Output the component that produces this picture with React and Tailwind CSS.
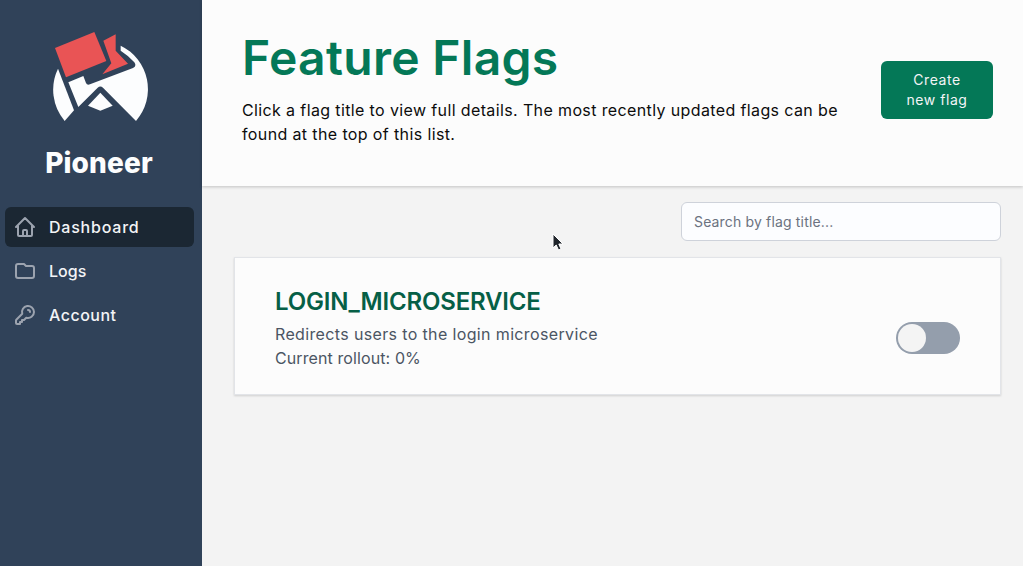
const navItems = [
  {
    label: "Dashboard",
    active: true,
    tracking: "tracking-[0.78px]",
    path: "M3 12l2-2m0 0l7-7 7 7M5 10v10a1 1 0 001 1h3m10-11l2 2m-2-2v10a1 1 0 01-1 1h-3m-6 0a1 1 0 001-1v-4a1 1 0 011-1h2a1 1 0 011 1v4a1 1 0 001 1m-6 0h6",
  },
  {
    label: "Logs",
    tracking: "tracking-normal",
    path: "M3 7v10a2 2 0 002 2h14a2 2 0 002-2V9a2 2 0 00-2-2h-6l-2-2H5a2 2 0 00-2 2z",
  },
  {
    label: "Account",
    tracking: "tracking-[0.5px]",
    path: "M15 7a2 2 0 012 2m4 0a6 6 0 01-7.743 5.743L11 17H9v2H7v2H4a1 1 0 01-1-1v-2.586a1 1 0 01.293-.707l5.964-5.964A6 6 0 1121 9z",
  },
];

function Logo() {
  return (
    <svg viewBox="60 30 300 280" className="h-[93.33px] w-[100px]" aria-hidden="true">
      <g fill="#fcfdfe">
        <path d="M84 146L132 271L104 303A145 145 0 0 1 84 146Z" />
        <path d="M272 77A145 145 0 0 1 318 303L219 203Q211 196 203 203L145 261L115 187L160 168L168 189Q171 196 180 193L309 144Q321 138 313 127Q293 105 272 92Z" />
        <path d="M211 218L248 257L211 272L174 257Z" />
      </g>
      <g fill="#e95455">
        <path d="M75 84L193 36L229 123L108 172Z" />
        <path d="M220 62L257 43V92L294 131L217 163L244 130Z" />
      </g>
    </svg>
  );
}

function Sidebar() {
  return (
    <aside className="flex w-[202px] shrink-0 flex-col bg-[#304259]">
      <div className="flex flex-col items-center pt-[30px] pr-[2px]">
        <Logo />
        <div className="mt-[22px] h-9 pr-[2px] text-[28px] leading-9 font-extrabold tracking-[0.15px] text-[#fcfdfe]">Pioneer</div>
      </div>
      <nav className="mt-[26px] flex flex-col gap-1 pr-2 pl-[5px]">
        {navItems.map((item) => (
          <a
            key={item.label}
            className={
              item.active
                ? "flex h-10 items-center gap-3 rounded-md bg-[#1b2733] px-2 text-[#f3f4f6]"
                : "flex h-10 items-center gap-3 rounded-md px-2 text-[#f3f4f6]"
            }
          >
            <svg
              viewBox="0 0 24 24"
              className="size-6 text-[#9ca3af]"
              fill="none"
              stroke="currentColor"
              strokeWidth="2"
              strokeLinecap="round"
              strokeLinejoin="round"
            >
              <path d={item.path} />
            </svg>
            <span className={`text-base font-medium ${item.tracking}`}>{item.label}</span>
          </a>
        ))}
      </nav>
    </aside>
  );
}

function Header() {
  return (
    <header className="flex h-[186px] shrink-0 items-start justify-between bg-[#fcfcfc] pr-[30px] pl-10 shadow-[0_1px_3px_rgba(0,0,0,0.2)]">
      <div className="pt-[34px]">
        <h1 className="text-5xl leading-[48px] font-semibold tracking-[0.3px] text-[#047857]">Feature Flags</h1>
        <p className="mt-4 text-base leading-6 tracking-[0.375px] whitespace-nowrap text-[#0c0c0c]">
          Click a flag title to view full details. The most recently updated flags can be
          <br />
          found at the top of this list.
        </p>
      </div>
      <button className="mt-[61px] h-[58px] w-28 rounded-md bg-[#047857] text-sm leading-5 tracking-[0.55px] text-[#f3f4f6]">
        Create
        <br />
        new flag
      </button>
    </header>
  );
}

function FlagCard() {
  return (
    <article className="mt-4 flex h-[138px] items-center justify-between border border-[#e2e4e8] bg-[#fcfcfc] px-10 shadow-[0_1px_2px_rgba(0,0,0,0.15)]">
      <div className="pt-1">
        <h2 className="text-2xl leading-8 font-semibold tracking-[-0.17px] text-[#065f46]">LOGIN_MICROSERVICE</h2>
        <p className="mt-1 text-base leading-6 text-[#4b5563]">
          <span className="tracking-[0.36px]">Redirects users to the login microservice</span>
          <br />
          <span className="tracking-[0.1px]">Current rollout: 0%</span>
        </p>
      </div>
      <div className="mt-6 flex h-8 w-16 items-center rounded-full bg-[#949eac] px-0.5">
        <div className="size-7 rounded-full bg-[#f4f4f4]" />
      </div>
    </article>
  );
}

export default function App() {
  return (
    <div className="relative flex h-[566px] w-[1023px] overflow-hidden bg-[#f3f3f3] font-['Inter',sans-serif]">
      <Sidebar />
      <div className="flex min-w-0 flex-1 flex-col">
        <Header />
        <main className="flex flex-1 flex-col pt-4 pr-[22px] pl-8">
          <input
            placeholder="Search by flag title..."
            className="h-[39px] w-80 self-end rounded-md border border-[#ced2da] bg-[#fcfdff] px-3 text-sm tracking-[0.16px] placeholder:text-[#6b7280]"
          />
          <FlagCard />
        </main>
      </div>
      <svg viewBox="0 0 14 20" className="absolute top-[232px] left-[551px] h-5 w-3.5">
        <path d="M2 2V16L5.2 13L7.5 18L10 17L7.8 12H12Z" fill="#20252b" stroke="#fff" strokeWidth="1" />
      </svg>
    </div>
  );
}
